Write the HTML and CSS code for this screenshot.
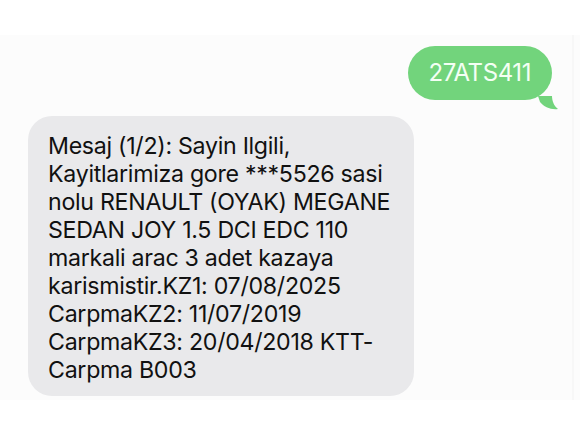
FILE: index.html
```html
<!DOCTYPE html>
<html lang="tr">
<head>
<meta charset="utf-8">
<title>Mesajlar</title>
<link rel="stylesheet" href="styles.css">
</head>
<body>
<div class="top-strip"></div>
<main class="thread">
  <div class="row row-out">
    <div class="bubble bubble-out">
      27ATS411
      <svg class="tail tail-out" width="20" height="14" viewBox="0 0 20 14"><path d="M0 0 H14 C14 5 16 10 20 13 C13 14 6 11 2 6 Z" fill="#72d47c"/></svg>
    </div>
  </div>
  <div class="row row-in">
    <div class="bubble bubble-in">Mesaj (1/2): Sayin Ilgili,<br>Kayitlarimiza gore ***5526 sasi<br>nolu RENAULT (OYAK) MEGANE<br>SEDAN JOY 1.5 DCI EDC 110<br>markali arac 3 adet kazaya<br>karismistir.KZ1: 07/08/2025<br>CarpmaKZ2: 11/07/2019<br>CarpmaKZ3: 20/04/2018 KTT-<br>Carpma B003</div>
  </div>
</main>
<div class="bottom-strip"></div>
</body>
</html>
```

FILE: styles.css
```css
html, body {
  margin: 0;
  padding: 0;
  background: #ffffff;
  width: 580px;
  height: 435px;
  overflow: hidden;
  font-family: Inter, "Liberation Sans", sans-serif;
}

.top-strip {
  height: 35px;
  background: #ffffff;
}

.thread {
  height: 365px;
  background: #fcfcfc;
  box-sizing: border-box;
  padding: 11px 28px 0 28px;
  display: flex;
  flex-direction: column;
  position: relative;
}

/* faint scroll edge on the right */
.thread::after {
  content: "";
  position: absolute;
  right: 6px;
  top: 0;
  bottom: 0;
  width: 2px;
  background: #f7f7f7;
}

.row {
  display: flex;
}

.row-out {
  justify-content: flex-end;
}

.bubble {
  position: relative;
}

.bubble-out {
  background: #72d47c;
  color: #f4fff4;
  font-size: 24px;
  letter-spacing: -0.4px;
  height: 54px;
  line-height: 54px;
  padding: 0 21px;
  border-radius: 27px;
}

.tail-out {
  position: absolute;
  right: -6px;
  bottom: -10px;
}

.row-in {
  margin-top: 16px;
}

.bubble-in {
  background: #e9e9eb;
  color: #111111;
  font-size: 23.2px;
  letter-spacing: -0.3px;
  white-space: nowrap;
  width: 386px;
  box-sizing: border-box;
  padding: 16px 20px 12px 20px;
  line-height: 28px;
  border-radius: 24px;
}

.bottom-strip {
  height: 35px;
  background: #ffffff;
}
```
